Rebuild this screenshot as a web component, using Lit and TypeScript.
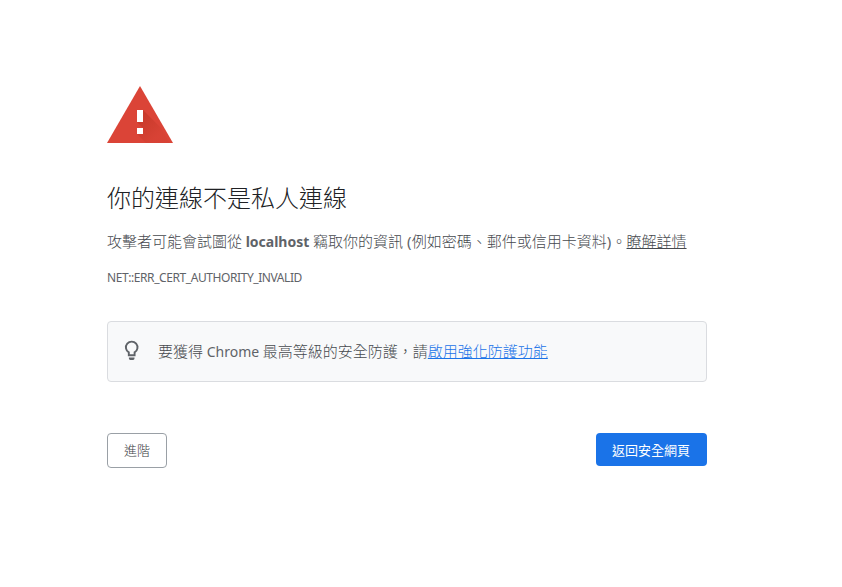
import { css, html, LitElement } from 'lit'
import { customElement, property } from 'lit/decorators.js';
import { classMap } from 'lit/directives/class-map.js';

@customElement('warning-icon')
class WarningIcon extends LitElement {

    static styles = css`
        :host {
            display: block;
            width: 66px;
            height: 57px;
        }
        svg {
            display: block;
        }
    `;

    render() {
        return html`
            <svg width="66" height="57" viewBox="0 0 66 57">
                <defs>
                    <linearGradient id="shade" gradientUnits="userSpaceOnUse" x1="30" y1="30" x2="50" y2="50">
                        <stop offset="0" stop-color="#a52714" stop-opacity=".38"></stop>
                        <stop offset="1" stop-color="#a52714" stop-opacity=".06"></stop>
                    </linearGradient>
                </defs>
                <path fill="#db4437" d="M33 0 66 57H0Z"/>
                <path fill="url(#shade)" d="M36 24 54 42 62.7 57H39L30 48h6v-6l-6-6h6Z"/>
                <path fill="#fff" d="M30 24h6v12h-6zM30 42h6v6h-6z"/>
            </svg>
        `;
    }

}

@customElement('action-button')
class ActionButton extends LitElement {

    @property({ type: Boolean }) primary = false;

    static styles = css`
        button {
            display: block;
            box-sizing: border-box;
            height: 35px;
            margin: 0;
            padding: 0 16px;
            border: 1px solid #9aa0a6;
            border-radius: 4px;
            background: #fff;
            color: #3c4043;
            font: 300 13px/33px "Noto Sans", "Noto Sans CJK TC", sans-serif;
            cursor: pointer;
        }
        button.primary {
            height: 33px;
            padding: 1px 17px 0 16px;
            border: 0;
            background: #1a73e8;
            color: #fff;
            font-weight: 400;
        }
    `;

    render() {
        return html`
            <button class="${classMap({ primary: this.primary })}"><slot></slot></button>
        `;
    }

}

@customElement('app-root')
class AppRoot extends LitElement {

    static styles = css`
        :host {
            display: block;
            box-sizing: border-box;
            width: 100%;
            height: 100vh;
            padding: 86px 0 0 107px;
            background: #fff;
            color: #46494e;
            font: 300 15px/24px "Noto Sans CJK TC", sans-serif;
            white-space: nowrap;
        }
        main {
            width: 600px;
        }
        h1 {
            margin: 36px 0 14px;
            color: #202124;
            font-size: 24px;
            font-weight: 300;
            line-height: 36px;
        }
        p {
            margin: 0;
        }
        a {
            color: inherit;
            text-decoration: underline;
            text-decoration-skip-ink: none;
            text-underline-offset: 1px;
            text-decoration-thickness: 1px;
        }
        .latin {
            color: #5f6368;
            font-family: "Noto Sans", sans-serif;
            font-size: 14px;
            font-weight: 400;
        }
        .latin.paren {
            font-size: 15px;
            letter-spacing: 0.2px;
        }
        .latin.host {
            font-weight: 700;
        }
        .code {
            margin-top: 13px;
            color: #5f6368;
            font: 400 12px/22px "Noto Sans", sans-serif;
            letter-spacing: -0.42px;
        }
        .promo {
            display: flex;
            align-items: center;
            box-sizing: border-box;
            height: 61px;
            margin-top: 32px;
            padding: 0 12px;
            border: 1px solid #dadce0;
            border-radius: 4px;
            background: #f8f9fa;
        }
        .promo svg {
            flex: none;
            margin: 0 14px 1px 0;
        }
        .promo a {
            color: #1a73e8;
        }
        .buttons {
            display: flex;
            justify-content: space-between;
            align-items: flex-start;
            margin-top: 51px;
        }
    `;

    render() {
        return html`
            <main>
                <warning-icon></warning-icon>
                <h1>你的連線不是私人連線</h1>
                <p>攻擊者可能會試圖從<span class="latin host"> localhost </span>竊取你的資訊<span class="latin paren"> (</span>例如密碼、郵件或信用卡資料<span class="latin paren">)</span>。<a href="#">瞭解詳情</a></p>
                <p class="code">NET::ERR_CERT_AUTHORITY_INVALID</p>
                <div class="promo">
                    <svg width="24" height="24" viewBox="0 0 24 24">
                        <path fill="none" stroke="#5f6368" stroke-width="1.9" d="M8.8 16.2v-2.8A5.8 5.8 0 1 1 14.6 13.400V16.2Z"/>
                        <path fill="#5f6368" d="M8.900 18.500h5.600v1q0 1.400-1.400 1.400h-2.800q-1.400 0-1.400-1.400z"/>
                    </svg>
                    <p>要獲得<span class="latin"> Chrome </span>最高等級的安全防護，請<a href="#">啟用強化防護功能</a></p>
                </div>
                <div class="buttons">
                    <action-button>進階</action-button>
                    <action-button primary>返回安全網頁</action-button>
                </div>
            </main>
        `;
    }

}
